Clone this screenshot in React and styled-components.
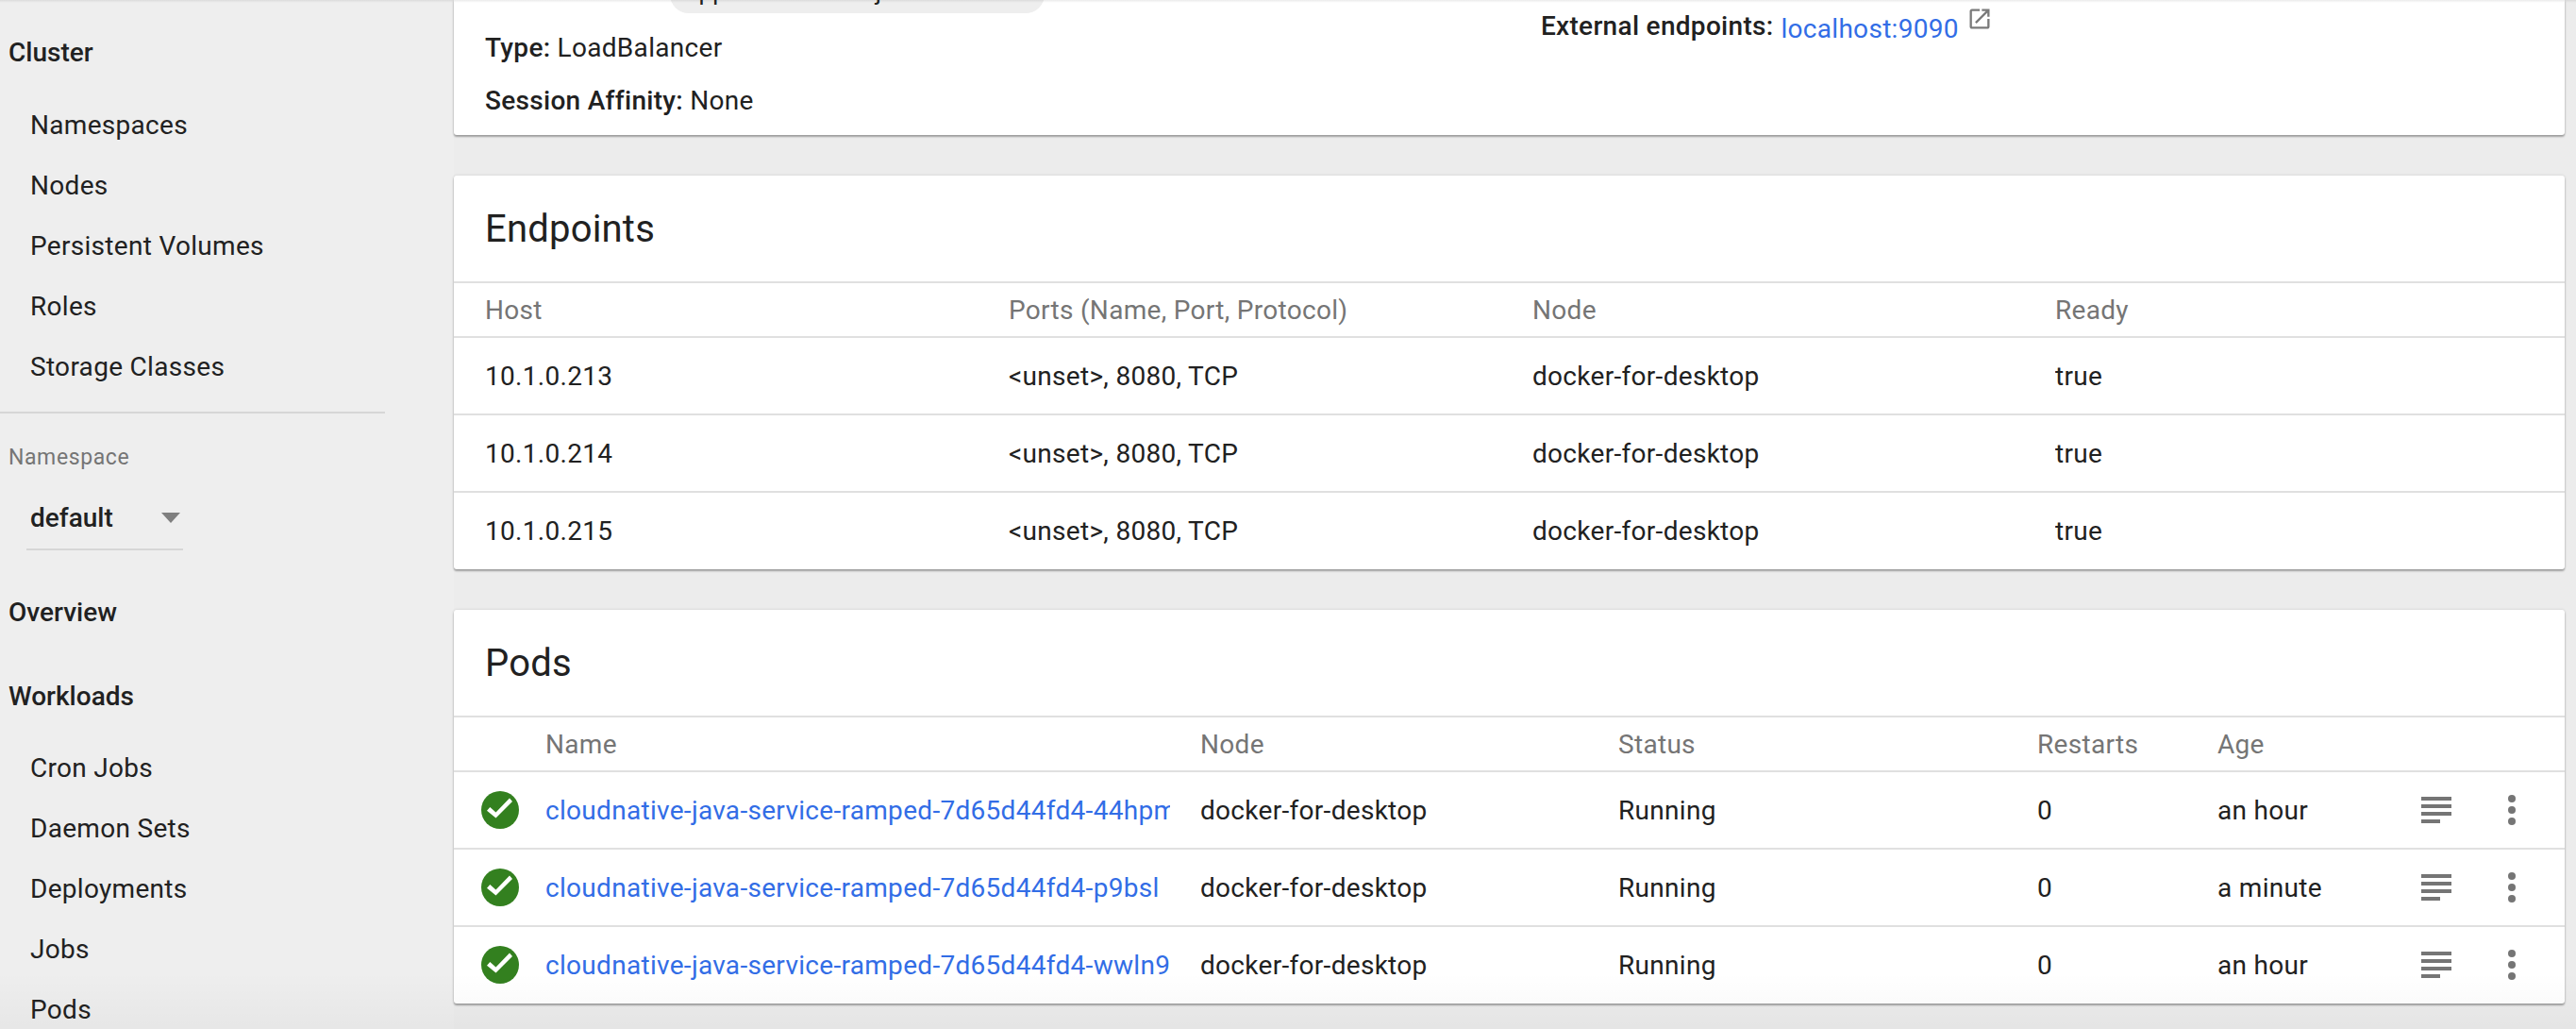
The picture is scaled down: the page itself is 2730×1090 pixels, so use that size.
import React from "react";
import styled, { createGlobalStyle } from "styled-components";

const Global = createGlobalStyle`
  html, body { margin: 0; padding: 0; height: 100%; background: #eeeeee; }
  body { font-family: Roboto, "Liberation Sans", sans-serif; color: #212121; overflow: hidden; }
`;

const Page = styled.div`
  display: flex;
  width: 2730px;
  height: 1090px;
  overflow: hidden;
  position: relative;
  background: #ececec;
  &::after {
    content: "";
    position: absolute;
    left: 0; right: 0; bottom: 0;
    height: 60px;
    background: linear-gradient(to bottom, rgba(0,0,0,0), rgba(0,0,0,0.03));
    pointer-events: none;
  }
  &::before {
    content: "";
    position: absolute;
    left: 0; right: 0; top: 0;
    height: 3px;
    z-index: 2;
    background: linear-gradient(to bottom, rgba(0,0,0,0.08), rgba(0,0,0,0));
  }
`;

const Sidebar = styled.nav`
  width: 481px;
  flex: none;
  padding-top: 24px;
  box-sizing: border-box;
  background: #eeeeee;
`;

const SectionTitle = styled.div`
  height: 64px;
  line-height: 64px;
  padding-left: 9px;
  font-size: 28px;
  font-weight: 500;
  margin-top: ${p => p.$top || 0}px;
`;

const NavItem = styled.div`
  height: 64px;
  line-height: 64px;
  padding-left: 32px;
  font-size: 28px;
  letter-spacing: 0.3px;
`;

const NavGroup = styled.div`
  margin-top: ${p => p.$top}px;
`;

const Divider = styled.div`
  width: 408px;
  height: 2px;
  margin-top: 15px;
  background: #d6d6d6;
`;

const NsLabel = styled.div`
  padding-left: 9px;
  margin-top: 30px;
  height: 32px;
  line-height: 33px;
  font-size: 23px;
  letter-spacing: 0.6px;
  color: #757575;
`;

const NsSelect = styled.div`
  display: flex;
  align-items: center;
  justify-content: space-between;
  box-sizing: border-box;
  margin: 31px 0 0 28px;
  width: 166px;
  height: 52px;
  padding: 0 3px 16px 4px;
  border-bottom: 2px solid #d6d6d6;
  font-size: 28px;
  font-weight: 500;
`;

const Arrow = styled.span`
  width: 0;
  height: 0;
  border-left: 10.5px solid transparent;
  border-right: 10.5px solid transparent;
  border-top: 11px solid #7f7f7f;
`;

const Main = styled.main`
  flex: 1;
  min-width: 0;
  padding-right: 12px;
  display: flex;
  flex-direction: column;
  gap: 43px;
`;

const Card = styled.section`
  background: #fff;
  border-radius: 3px;
  box-shadow: 0 2px 2px rgba(0,0,0,0.3), 0 0 3px rgba(0,0,0,0.14);
  flex: none;
`;

const SummaryCard = styled(Card)`
  height: 143px;
  overflow: hidden;
  border-radius: 0 0 3px 3px;
  display: grid;
  grid-template-columns: 1119px 1fr;
  padding-left: 33px;
  box-sizing: border-box;
  letter-spacing: 0.3px;
`;

const SummaryColumn = styled.div`
  min-width: 0;
`;

const Chip = styled.div`
  width: 397px;
  height: 40px;
  margin: -26px 0 0 196px;
  box-sizing: border-box;
  padding-left: 16px;
  border-radius: 20px;
  background: #eeeeee;
  font-size: 26px;
  line-height: 34px;
  color: #212121;
  white-space: nowrap;
  overflow: hidden;
`;

const Field = styled.div`
  height: 56px;
  line-height: 56px;
  font-size: 28px;
  white-space: nowrap;
  margin-top: ${p => p.$top || 0}px;
`;

const FieldName = styled.b`
  font-weight: 500;
`;

const Link = styled.a`
  color: #326de6;
  text-decoration: none;
`;

const Endpoint = styled.div`
  display: flex;
  align-items: flex-start;
  font-size: 28px;
`;

const EndpointLink = styled(Link)`
  margin: 4px 0 0 8px;
  display: block;
  line-height: 54px;
`;

const EndpointName = styled(FieldName)`
  line-height: 56px;
`;

const OpenIcon = styled.svg`
  width: 28px;
  height: 28px;
  margin: 6px 0 0 8px;
  fill: #7a7a7a;
  flex: none;
`;

const TableCard = styled(Card)`
  padding-bottom: 1px;
`;

const CardTitle = styled.h2`
  margin: 0;
  height: 112px;
  line-height: 114px;
  padding-left: 33px;
  font-size: 40px;
  font-weight: 400;
  letter-spacing: 0.2px;
  color: #212121;
`;

const Row = styled.div`
  display: grid;
  grid-template-columns: ${p => p.$cols};
  align-items: center;
  height: ${p => p.$head ? 58 : 82}px;
  box-sizing: border-box;
  border-top: 2px solid #e0e0e0;
  font-size: 28px;
  letter-spacing: 0.3px;
  color: ${p => p.$head ? "#757575" : "#212121"};
`;

const Cell = styled.div`
  min-width: 0;
  white-space: nowrap;
  overflow: hidden;
`;

const StatusIcon = styled.svg`
  width: 40px;
  height: 40px;
  margin-left: 29px;
  display: block;
`;

const ActionIcon = styled.svg`
  width: 48px;
  height: 48px;
  display: block;
  fill: #757575;
`;

const Actions = styled.div`
  display: flex;
  gap: 32px;
  margin-left: 9px;
`;

const epCols = "33px 555px 555px 554px 1fr";
const podCols = "97px 662px 32px 443px 444px 191px 199px 1fr";

const endpoints = ["10.1.0.213", "10.1.0.214", "10.1.0.215"];
const pods = [
  ["cloudnative-java-service-ramped-7d65d44fd4-44hpm", "an hour"],
  ["cloudnative-java-service-ramped-7d65d44fd4-p9bsl", "a minute"],
  ["cloudnative-java-service-ramped-7d65d44fd4-wwln9", "an hour"],
];

const clusterItems = ["Namespaces", "Nodes", "Persistent Volumes", "Roles", "Storage Classes"];
const workloadItems = ["Cron Jobs", "Daemon Sets", "Deployments", "Jobs", "Pods"];

const CheckCircle = () => (
  <StatusIcon viewBox="0 0 40 40">
    <circle cx="20" cy="20" r="20" fill="#33801f" />
    <path d="M6 20.7 L9.3 17 L15.5 22.5 L30 7.5 L33 11 L15.5 28.5 Z" fill="#fff" />
  </StatusIcon>
);

const LogsIcon = () => (
  <ActionIcon viewBox="0 0 24 24">
    <path d="M4 5h16v2H4zM4 9h16v2H4zM4 13h16v2H4zM4 17h10v2H4z" />
  </ActionIcon>
);

const MoreIcon = () => (
  <ActionIcon viewBox="0 0 24 24">
    <circle cx="12" cy="6" r="2" />
    <circle cx="12" cy="12" r="2" />
    <circle cx="12" cy="18" r="2" />
  </ActionIcon>
);

export default function App() {
  return (
    <Page>
      <Global />
      <Sidebar>
        <SectionTitle>Cluster</SectionTitle>
        <NavGroup $top={13}>
          {clusterItems.map(t => <NavItem key={t}>{t}</NavItem>)}
        </NavGroup>
        <Divider />
        <NsLabel>Namespace</NsLabel>
        <NsSelect>default<Arrow /></NsSelect>
        <SectionTitle $top={34}>Overview</SectionTitle>
        <SectionTitle $top={25}>Workloads</SectionTitle>
        <NavGroup $top={12}>
          {workloadItems.map(t => <NavItem key={t}>{t}</NavItem>)}
        </NavGroup>
      </Sidebar>
      <Main>
        <SummaryCard>
          <SummaryColumn>
            <Chip>app: cloudnative-java-service</Chip>
            <Field $top={9}><FieldName>Type:</FieldName> LoadBalancer</Field>
            <Field><FieldName>Session Affinity:</FieldName> None</Field>
          </SummaryColumn>
          <SummaryColumn>
            <Endpoint>
              <EndpointName>External endpoints:</EndpointName>
              <EndpointLink>localhost:9090</EndpointLink>
              <OpenIcon viewBox="0 0 24 24">
                <path d="M19 19H5V5h7V3H5c-1.11 0-2 .9-2 2v14c0 1.1.89 2 2 2h14c1.1 0 2-.9 2-2v-7h-2v7zM14 3v2h3.59l-9.83 9.83 1.41 1.41L19 6.41V10h2V3h-7z" />
              </OpenIcon>
            </Endpoint>
          </SummaryColumn>
        </SummaryCard>

        <TableCard>
          <CardTitle>Endpoints</CardTitle>
          <Row $head $cols={epCols}>
            <span />
            <Cell>Host</Cell>
            <Cell>Ports (Name, Port, Protocol)</Cell>
            <Cell>Node</Cell>
            <Cell>Ready</Cell>
          </Row>
          {endpoints.map(h => (
            <Row key={h} $cols={epCols}>
              <span />
              <Cell>{h}</Cell>
              <Cell>&lt;unset&gt;, 8080, TCP</Cell>
              <Cell>docker-for-desktop</Cell>
              <Cell>true</Cell>
            </Row>
          ))}
        </TableCard>

        <TableCard>
          <CardTitle>Pods</CardTitle>
          <Row $head $cols={podCols}>
            <span />
            <Cell>Name</Cell>
            <span />
            <Cell>Node</Cell>
            <Cell>Status</Cell>
            <Cell>Restarts</Cell>
            <Cell>Age</Cell>
            <span />
          </Row>
          {pods.map(([name, age]) => (
            <Row key={name} $cols={podCols}>
              <CheckCircle />
              <Cell><Link>{name}</Link></Cell>
              <span />
              <Cell>docker-for-desktop</Cell>
              <Cell>Running</Cell>
              <Cell>0</Cell>
              <Cell>{age}</Cell>
              <Actions><LogsIcon /><MoreIcon /></Actions>
            </Row>
          ))}
        </TableCard>
      </Main>
    </Page>
  );
}
